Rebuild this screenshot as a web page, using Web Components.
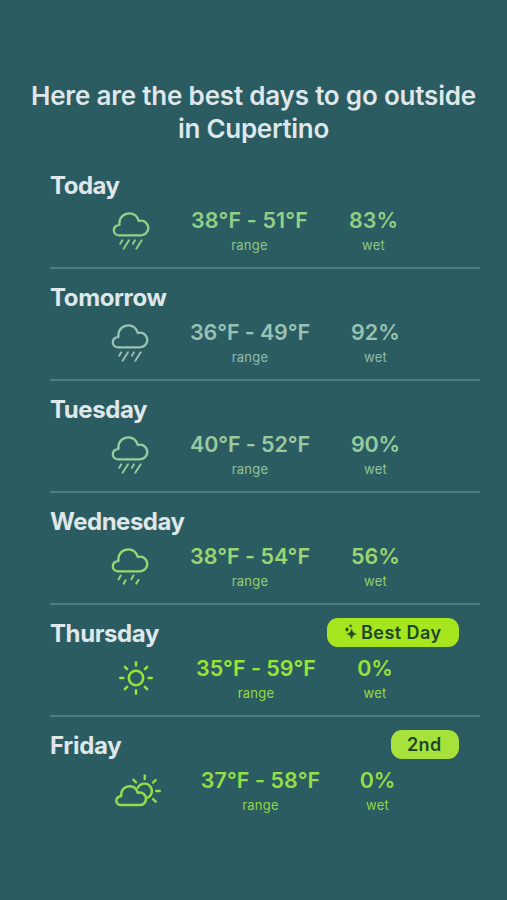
<!DOCTYPE html>
<html lang="en">
<head>
<meta charset="utf-8">
<title>Best days</title>
<style>
    body {
        margin: 0;
        background: #2b5c61;
        color: #dfe7ea;
        font-family: Inter, "Liberation Sans", sans-serif;
    }
</style>
</head>
<body>
<best-days>
    <fit-text slot="title" width="445">Here are the best days to go outside</fit-text>
    <fit-text slot="title" width="151">in Cupertino</fit-text>

    <day-row name="Today" name-width="69.5" icon="rain" color="#93cf86" lead="62" columns="38px 118px 49px" gap="40.5"
        range="38°F - 51°F" range-width="117" wet="83%" wet-width="49"></day-row>
    <day-row name="Tomorrow" name-width="116.5" icon="rain" color="#98c2b4" lead="61" columns="38px 121px 49px" gap="40.5"
        range="36°F - 49°F" range-width="120" wet="92%" wet-width="49"></day-row>
    <day-row name="Tuesday" name-width="97" icon="rain" color="#9acb9e" lead="61" columns="38px 121px 49px" gap="40.5"
        range="40°F - 52°F" range-width="120" wet="90%" wet-width="49"></day-row>
    <day-row name="Wednesday" name-width="134.5" icon="drizzle" color="#9bd672" lead="61" columns="38px 121px 49px" gap="40.5"
        range="38°F - 54°F" range-width="120" wet="56%" wet-width="49"></day-row>
    <day-row name="Thursday" name-width="109" icon="sun" color="#9ae337" lead="69" columns="34px 121px 32px" gap="42.5"
        range="35°F - 59°F" range-width="120" wet="0%" wet-width="35.5">
        <day-badge slot="badge" color="#a5e61f" icon><fit-text width="80.5">Best Day</fit-text></day-badge>
    </day-row>
    <day-row name="Friday" name-width="71.5" icon="cloud-sun" color="#95de47" lead="65" columns="46px 119px 35px" gap="40"
        range="37°F - 58°F" range-width="119.5" wet="0%" wet-width="35.5">
        <day-badge slot="badge" color="#a6e23b"><fit-text width="34.5">2nd</fit-text></day-badge>
    </day-row>
</best-days>

<script>
const CLOUD = 'M7.6 24.3H29a7.3 7.3 0 0 0 0-14.6q-1.2 0-2.2.3C25.5 5.4 21.8 2.3 17.4 2.3 11.8 2.3 7.4 6.7 7.4 12.2q0 .8.1 1.6C4 14.3 1.8 16.5 1.8 19.2c0 2.9 2.4 5.1 5.8 5.1z';

const ICONS = {
    rain: {
        width: 38,
        body: `<path d="${CLOUD}"/>
            <path stroke-width="1.9" d="M10.3 29.2 8.2 32.8M17 29.2l-5.4 8.6M23 29.2l-2.1 3.6M29.7 29.2l-5.4 8.6"/>`
    },
    drizzle: {
        width: 38,
        body: `<path d="${CLOUD}"/>
            <path stroke-width="2" d="M9.8 28.6 7.6 32.2M14.6 33.2l-2 3.5M22.5 28.6l-2.2 3.6M27.5 32.9l-2.2 3.7"/>`
    },
    sun: {
        width: 34,
        body: `<g stroke-width="2.5"><circle cx="17" cy="19" r="7.2"/>
            <path d="M17 3.2v3.2M17 31.6v3.2M1.2 19h3.2M29.6 19h3.2M5.9 7.9l2.2 2.2M25.9 27.9l2.2 2.2M5.9 30.1l2.2-2.2M25.9 10.1l2.2-2.2"/></g>`
    },
    'cloud-sun': {
        width: 46,
        body: `<path transform="translate(-.2 13.2) scale(.86)" stroke-width="2.9" d="${CLOUD}"/>
            <path stroke-width="2.4" d="M22.9 16.6A7.4 7.4 0 1 1 31.3 27.2M29.7 4.4v3.6M18.4 8.7l2.6 2.6M40.7 9l-2.6 2.6M41.2 20h3.6M38.1 28.1l2.6 2.6"/>`
    }
};





customElements.define('weather-icon', class extends HTMLElement {
    connectedCallback() {
        const icon = ICONS[this.getAttribute('name')];
        this.attachShadow({mode: 'open'}).innerHTML = `
<style>
    :host {
        display: block;
    }
    svg {
        display: block;
        fill: none;
        stroke: currentColor;
        stroke-width: 2.3;
        stroke-linecap: round;
        stroke-linejoin: round;
    }
</style>
<svg width="${icon.width}" height="40" viewBox="0 0 ${icon.width} 40">${icon.body}</svg>`;
    }
});





customElements.define('day-metric', class extends HTMLElement {
    connectedCallback() {
        this.attachShadow({mode: 'open'}).innerHTML = `
<style>
    :host {
        display: flex;
        flex-direction: column;
        align-items: center;
    }
    .value {
        font-size: 21.5px;
        font-weight: 600;
        line-height: 25px;
    }
    .label {
        font-size: 13px;
        line-height: 25px;
        opacity: .95;
    }
</style>
<fit-text class="value" width="${this.getAttribute('width')}">${this.getAttribute('value')}</fit-text>
<fit-text class="label" width="${this.getAttribute('label-width')}">${this.getAttribute('label')}</fit-text>`;
    }
});





customElements.define('day-badge', class extends HTMLElement {
    connectedCallback() {
        const star = this.hasAttribute('icon') ? `
<svg width="18" height="18" viewBox="0 0 18 18">
    <path d="M8.6 4.9Q9.1 9.3 13.2 9.9 9.1 10.5 8.6 14.9 8.1 10.5 4 9.9 8.1 9.3 8.6 4.9z"/>
    <path d="M4 3.3Q4.3 5.1 6 5.4 4.3 5.7 4 7.5 3.7 5.7 2 5.4 3.7 5.1 4 3.3z"/>
    <path d="M7.6.6Q7.8 1.7 8.8 1.9 7.8 2.1 7.6 3.2 7.4 2.1 6.4 1.9 7.4 1.7 7.6.6z"/>
</svg>` : '';
        this.attachShadow({mode: 'open'}).innerHTML = `
<style>
    :host {
        display: flex;
        align-items: center;
        box-sizing: border-box;
        height: 28.5px;
        padding: 0 17px 0 16.5px;
        border-radius: 11px;
        background: ${this.getAttribute('color')};
        color: #20472b;
        font-size: 18px;
        font-weight: 600;
        line-height: 28px;
    }
    svg {
        fill: currentColor;
        stroke: currentColor;
        stroke-width: .5;
    }
</style>
${star}<slot></slot>`;
    }
});





customElements.define('day-row', class extends HTMLElement {
    connectedCallback() {
        const attr = name => this.getAttribute(name);
        this.attachShadow({mode: 'open'}).innerHTML = `
<style>
    :host {
        display: block;
        box-sizing: border-box;
        height: 112px;
        padding-top: 13px;
        border-bottom: 2px solid #507b81;
    }
    :host(:last-of-type) {
        border-color: transparent;
    }
    header {
        display: flex;
        align-items: center;
        justify-content: space-between;
        height: 29px;
        margin: 0 21.5px 9px 0;
    }
    .name {
        padding-top: 1px;
        font-size: 24px;
        font-weight: 700;
    }
    .metrics {
        display: grid;
        grid-template-columns: ${attr('columns')};
        column-gap: ${attr('gap')}px;
        justify-items: center;
        margin-left: ${attr('lead')}px;
        color: ${attr('color')};
    }
    weather-icon {
        padding-top: 3px;
    }
</style>
<header>
    <fit-text class="name" width="${attr('name-width')}">${attr('name')}</fit-text>
    <slot name="badge"></slot>
</header>
<div class="metrics">
    <weather-icon name="${attr('icon')}"></weather-icon>
    <day-metric value="${attr('range')}" width="${attr('range-width')}" label="range" label-width="36.5"></day-metric>
    <day-metric value="${attr('wet')}" width="${attr('wet-width')}" label="wet" label-width="23"></day-metric>
</div>`;
    }
});





customElements.define('best-days', class extends HTMLElement {
    connectedCallback() {
        this.attachShadow({mode: 'open'}).innerHTML = `
<style>
    :host {
        display: block;
        box-sizing: border-box;
        height: 900px;
        padding-top: 78.5px;
    }
    .title {
        display: flex;
        flex-direction: column;
        align-items: center;
        height: 78.5px;
        font-size: 26px;
        font-weight: 600;
        line-height: 33.5px;
    }
    .days {
        margin: 0 27px 0 50px;
    }
</style>
<div class="title"><slot name="title"></slot></div>
<div class="days"><slot></slot></div>`;
    }
});





// Spreads a single line of text over a given width.
// Defined last: it measures itself, so the elements around it must have their styles.
customElements.define('fit-text', class extends HTMLElement {
    connectedCallback() {
        const shadow = this.attachShadow({mode: 'open'});
        shadow.innerHTML = `
<style>
    :host {
        display: block;
        white-space: nowrap;
    }
    span {
        display: inline-block;
        font-kerning: normal;
    }
</style>
<span><slot></slot></span>`;
        const span = shadow.querySelector('span');
        const natural = span.getBoundingClientRect().width;
        const spacing = (this.getAttribute('width') - natural) / this.textContent.length;
        span.style.letterSpacing = spacing.toFixed(3) + 'px';
    }
});
</script>
</body>
</html>
